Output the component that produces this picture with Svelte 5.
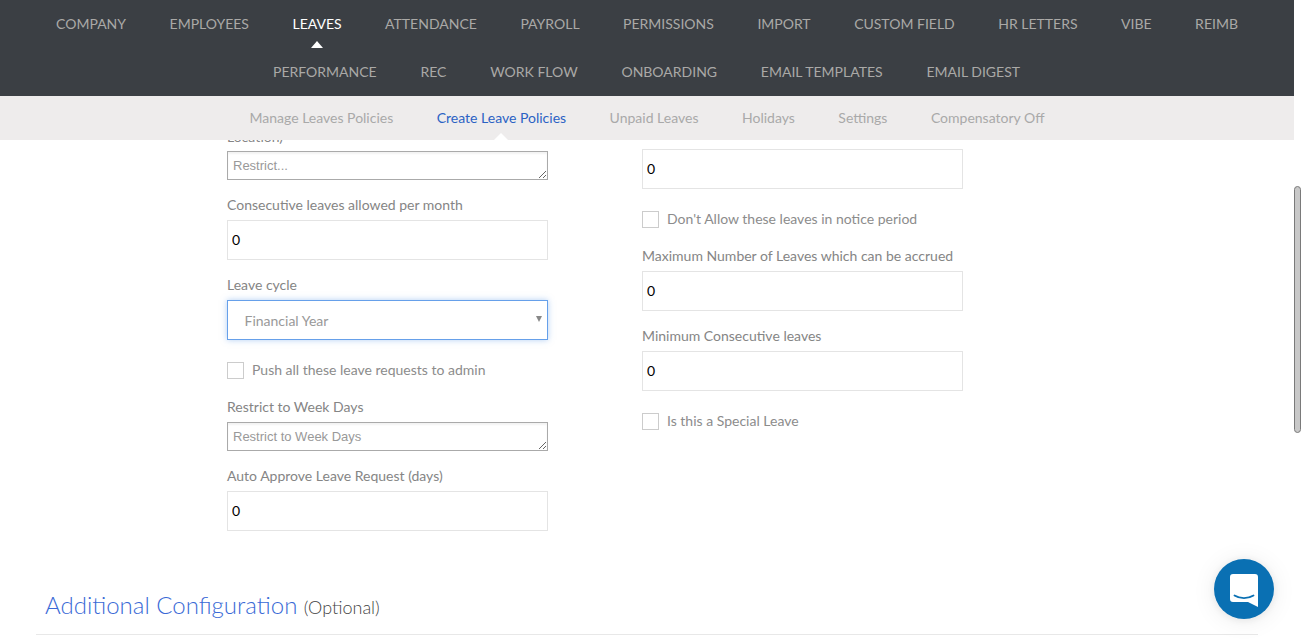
<script>
  const row1 = ['COMPANY','EMPLOYEES','LEAVES','ATTENDANCE','PAYROLL','PERMISSIONS','IMPORT','CUSTOM FIELD','HR LETTERS','VIBE','REIMB'];
  const row2 = ['PERFORMANCE','REC','WORK FLOW','ONBOARDING','EMAIL TEMPLATES','EMAIL DIGEST'];
  const sub = ['Manage Leaves Policies','Create Leave Policies','Unpaid Leaves','Holidays','Settings','Compensatory Off'];
</script>

<div class="page">
  <header class="topnav">
    <nav class="navrow">
      {#each row1 as item}
        <a class="navitem" class:active={item === 'LEAVES'} href="#top">{item}</a>
      {/each}
    </nav>
    <nav class="navrow second">
      {#each row2 as item}
        <a class="navitem" href="#top">{item}</a>
      {/each}
    </nav>
  </header>

  <nav class="subnav">
    {#each sub as item}
      <a class="subitem" class:current={item === 'Create Leave Policies'} href="#top">{item}</a>
    {/each}
  </nav>

  <main class="content">
    <div class="columns">
      <div class="col">
        <div class="label first">Location)</div>
        <textarea class="ta" placeholder="Restrict..."></textarea>
        <div class="label">Consecutive leaves allowed per month</div>
        <input class="inp" value="0" />
        <div class="label">Leave cycle</div>
        <div class="selectwrap">
          <select class="sel"><option>Financial Year</option></select>
          <span class="caret"></span>
        </div>
        <label class="check"><input type="checkbox" /><span>Push all these leave requests to admin</span></label>
        <div class="label after-check">Restrict to Week Days</div>
        <textarea class="ta" placeholder="Restrict to Week Days"></textarea>
        <div class="label">Auto Approve Leave Request (days)</div>
        <input class="inp" value="0" />
      </div>
      <div class="col right">
        <input class="inp" value="0" />
        <label class="check"><input type="checkbox" /><span>Don't Allow these leaves in notice period</span></label>
        <div class="label after-check">Maximum Number of Leaves which can be accrued</div>
        <input class="inp" value="0" />
        <div class="label">Minimum Consecutive leaves</div>
        <input class="inp" value="0" />
        <label class="check"><input type="checkbox" /><span>Is this a Special Leave</span></label>
      </div>
    </div>
    <section class="additional">
      <h2>Additional Configuration <small>(Optional)</small></h2>
    </section>
  </main>
</div>

<div class="thumb"></div>
<button class="chat" aria-label="Open chat">
  <svg width="28" height="33" viewBox="0 0 28 33">
    <path d="M3 0H25a3 3 0 0 1 3 3V33L18 28H3a3 3 0 0 1-3-3V3a3 3 0 0 1 3-3Z" fill="#fff"/>
    <path d="M4.500 21.500C10 25 18 25 23.500 21.500" fill="none" stroke="#0a70b3" stroke-width="1.800" stroke-linecap="round"/>
  </svg>
</button>

<style>
  :global(body) {
    margin: 0;
    overflow: hidden;
    background: #fff;
    font-family: Lato, sans-serif;
  }
  .page {
    width: 1294px;
    height: 639px;
    overflow: hidden;
    font-family: Lato, sans-serif;
    font-size: 14px;
  }
  .topnav {
    background: #3b3f44;
    height: 96px;
  }
  .navrow {
    display: flex;
    justify-content: center;
    gap: 43.5px;
    height: 48px;
    align-items: center;
  }
  .navrow.second { gap: 43.8px; padding-right: 1px; }
  .navitem {
    position: relative;
    color: #aaa9a7;
    text-decoration: none;
    font-size: 14px;
    line-height: 48px;
  }
  .navitem.active { color: #fff; }
  .navitem.active::after {
    content: '';
    position: absolute;
    left: 50%;
    bottom: 0;
    margin-left: -6px;
    border: 6px solid transparent;
    border-top: 0;
    border-bottom: 7px solid #fff;
  }
  .subnav {
    background: #eeecec;
    height: 44px;
    display: flex;
    justify-content: center;
    gap: 43.500px;
    align-items: center;
  }
  .subitem {
    position: relative;
    color: #a9a9a9;
    text-decoration: none;
    line-height: 44px;
  }
  .subitem.current { color: #2b62c4; }
  .subitem.current::after {
    content: '';
    position: absolute;
    left: 50%;
    bottom: 0;
    margin-left: -7px;
    border: 7px solid transparent;
    border-top: 0;
    border-bottom: 7px solid #fff;
  }
  .content {
    height: 499px;
    overflow: hidden;
  }
  .columns {
    display: flex;
    gap: 94px;
    padding-left: 227px;
    margin-top: -12px;
    height: 403px;
  }
  .col {
    width: 321px;
    display: flex;
    flex-direction: column;
    align-items: stretch;
  }
  .col > * { flex: none; }
  .right { padding-top: 21px; }
  .label {
    color: #858585;
    font-size: 14px;
    line-height: 18px;
    margin-top: 16px;
    margin-bottom: 6px;
  }
  .label.first { margin-top: 0; margin-bottom: 5px; }
  .label.after-check { margin-top: 19px; }
  .ta {
    display: block;
    box-sizing: border-box;
    width: 321px;
    height: 29px;
    margin: 0;
    padding: 6px 5px 4px;
    border: 1px solid #aaa;
    box-shadow: inset 0 2px 2px rgba(0,0,0,0.05);
    font-family: "Liberation Sans", Arial, sans-serif;
    font-size: 13px;
    line-height: 15px;
    outline: none;
    border-radius: 0;
  }
  .ta::placeholder { color: #999; opacity: 1; }
  .inp {
    display: block;
    box-sizing: border-box;
    width: 321px;
    height: 40px;
    margin: 0;
    padding: 0 4px 2px;
    border: 1px solid #e4e4e4;
    font-family: Lato, sans-serif;
    font-size: 14px;
    color: #000;
    outline: none;
    border-radius: 0;
  }
  .selectwrap { position: relative; height: 40px; }
  .sel {
    appearance: none;
    display: block;
    box-sizing: border-box;
    width: 321px;
    height: 40px;
    padding: 0 16.500px;
    background: #fff;
    border: 1px solid #66a0ea;
    box-shadow: 0 0 6px rgba(102,160,234,0.5);
    font-family: Lato, sans-serif;
    font-size: 14px;
    color: #999;
    outline: none;
    border-radius: 0;
  }
  .caret {
    position: absolute;
    right: 6px;
    top: 16px;
    border: 3px solid transparent;
    border-top: 6px solid #888;
    border-bottom: 0;
    pointer-events: none;
  }
  .check {
    display: flex;
    align-items: center;
    gap: 8px;
    color: #8c8c8c;
    font-size: 14px;
    line-height: 18px;
    margin-top: 22px;
    height: 17px;
  }
  .check span { padding-bottom: 2px; }
  .check input {
    appearance: none;
    box-sizing: border-box;
    width: 17px;
    height: 17px;
    margin: 0;
    border: 1px solid #ccc;
    background: #fff;
    flex: none;
  }
  .additional {
    margin: 0 36px;
    width: 1222px;
    height: 104px;
    box-sizing: border-box;
    border-bottom: 1px solid #e8e8e8;
    padding: 60px 9px 0;
  }
  h2 {
    margin: 0;
    font-weight: 300;
    font-size: 24px;
    line-height: 28px;
    color: #3a6ad6;
  }
  h2 small {
    font-size: 18px;
    color: #444;
    font-weight: 300;
  }
  .thumb {
    position: fixed;
    left: 1294px;
    top: 186px;
    width: 7px;
    height: 247px;
    box-sizing: border-box;
    background: #c8c8c8;
    border: 1px solid #7a7a7a;
    border-radius: 4px;
  }
  .chat {
    position: fixed;
    left: 1214px;
    top: 559px;
    width: 60px;
    height: 60px;
    padding: 2px 0 0;
    border: 0;
    border-radius: 50%;
    background: #0a70b3;
    box-shadow: 0 1px 10px rgba(0,0,0,0.08), 0 2px 24px rgba(0,0,0,0.08);
    display: flex;
    align-items: center;
    justify-content: center;
  }
</style>
